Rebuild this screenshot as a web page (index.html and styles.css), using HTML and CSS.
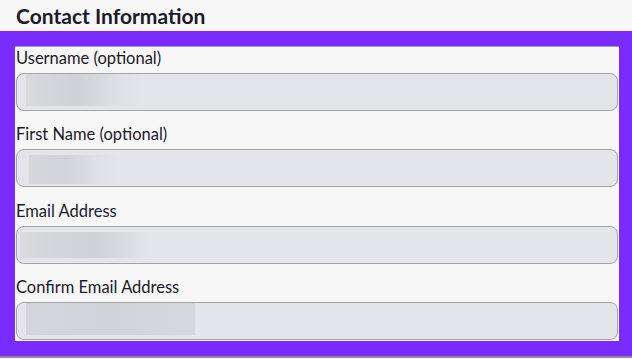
FILE: index.html
```html
<!DOCTYPE html>
<html lang="en">
<head>
<meta charset="utf-8">
<title>Contact Information</title>
<link rel="stylesheet" href="styles.css">
</head>
<body>
<h2 class="title">Contact Information</h2>
<div class="frame">
  <div class="panel">
    <div class="field">
      <label class="label">Username (optional)</label>
      <div class="input"><div class="blur blur-user"></div></div>
    </div>
    <div class="field">
      <label class="label">First Name (optional)</label>
      <div class="input"><div class="blur blur-first"></div></div>
    </div>
    <div class="field">
      <label class="label">Email Address</label>
      <div class="input"><div class="blur blur-email"></div></div>
    </div>
    <div class="field">
      <label class="label">Confirm Email Address</label>
      <div class="input"><div class="blur blur-confirm"></div></div>
    </div>
  </div>
</div>
<div class="after"></div>
</body>
</html>
```
FILE: styles.css
```css
html, body {
  margin: 0;
  padding: 0;
  background: #f7f7f7;
  font-family: Lato, "Open Sans", sans-serif;
  color: #1b1b29;
}

.title {
  margin: 0;
  height: 31px;
  padding-left: 16px;
  font-size: 21px;
  font-weight: 700;
  line-height: 31px;
}

.frame {
  background: #7a2bff;
  padding: 15px 13px 15px 15px;
}

.panel {
  background: #f7f7f7;
  border-top: 1px solid #9d9d9d;
  padding: 0 1px 1px 1px;
  display: flex;
  flex-direction: column;
  gap: 12.3px;
}

.field {
  display: flex;
  flex-direction: column;
}

.label {
  display: block;
  font-size: 16.5px;
  line-height: 22px;
  margin-bottom: 4px;
}

.input {
  box-sizing: border-box;
  height: 38px;
  background: #e4e5e9;
  border: 1px solid #a4a4a4;
  border-radius: 8px;
  display: flex;
}

.blur {
  flex: none;
}

.blur-user {
  margin: 0 0 0 9px;
  width: 115px;
  height: 32px;
  background: linear-gradient(90deg, #d8d9dd 0%, #d0d1d5 45%, #dddee2 75%, #e4e5e9 100%);
}

.blur-first {
  margin: 5px 0 0 12px;
  width: 90px;
  height: 29px;
  background: linear-gradient(90deg, #d6d7db 0%, #d2d3d7 40%, #dfe0e4 75%, #e4e5e9 100%);
}

.blur-email {
  margin: 5px 0 0 3px;
  width: 130px;
  height: 26px;
  background: linear-gradient(90deg, #dadbdf 0%, #d4d5d9 25%, #d0d1d5 60%, #e4e5e9 100%);
}

.blur-confirm {
  margin: 0 0 0 9px;
  width: 169px;
  height: 32px;
  background: linear-gradient(90deg, #d5d6da 0%, #d2d3d7 50%, #d7d8dc 100%);
}

.after {
  border-top: 2px solid #8d8d8d;
}
```
